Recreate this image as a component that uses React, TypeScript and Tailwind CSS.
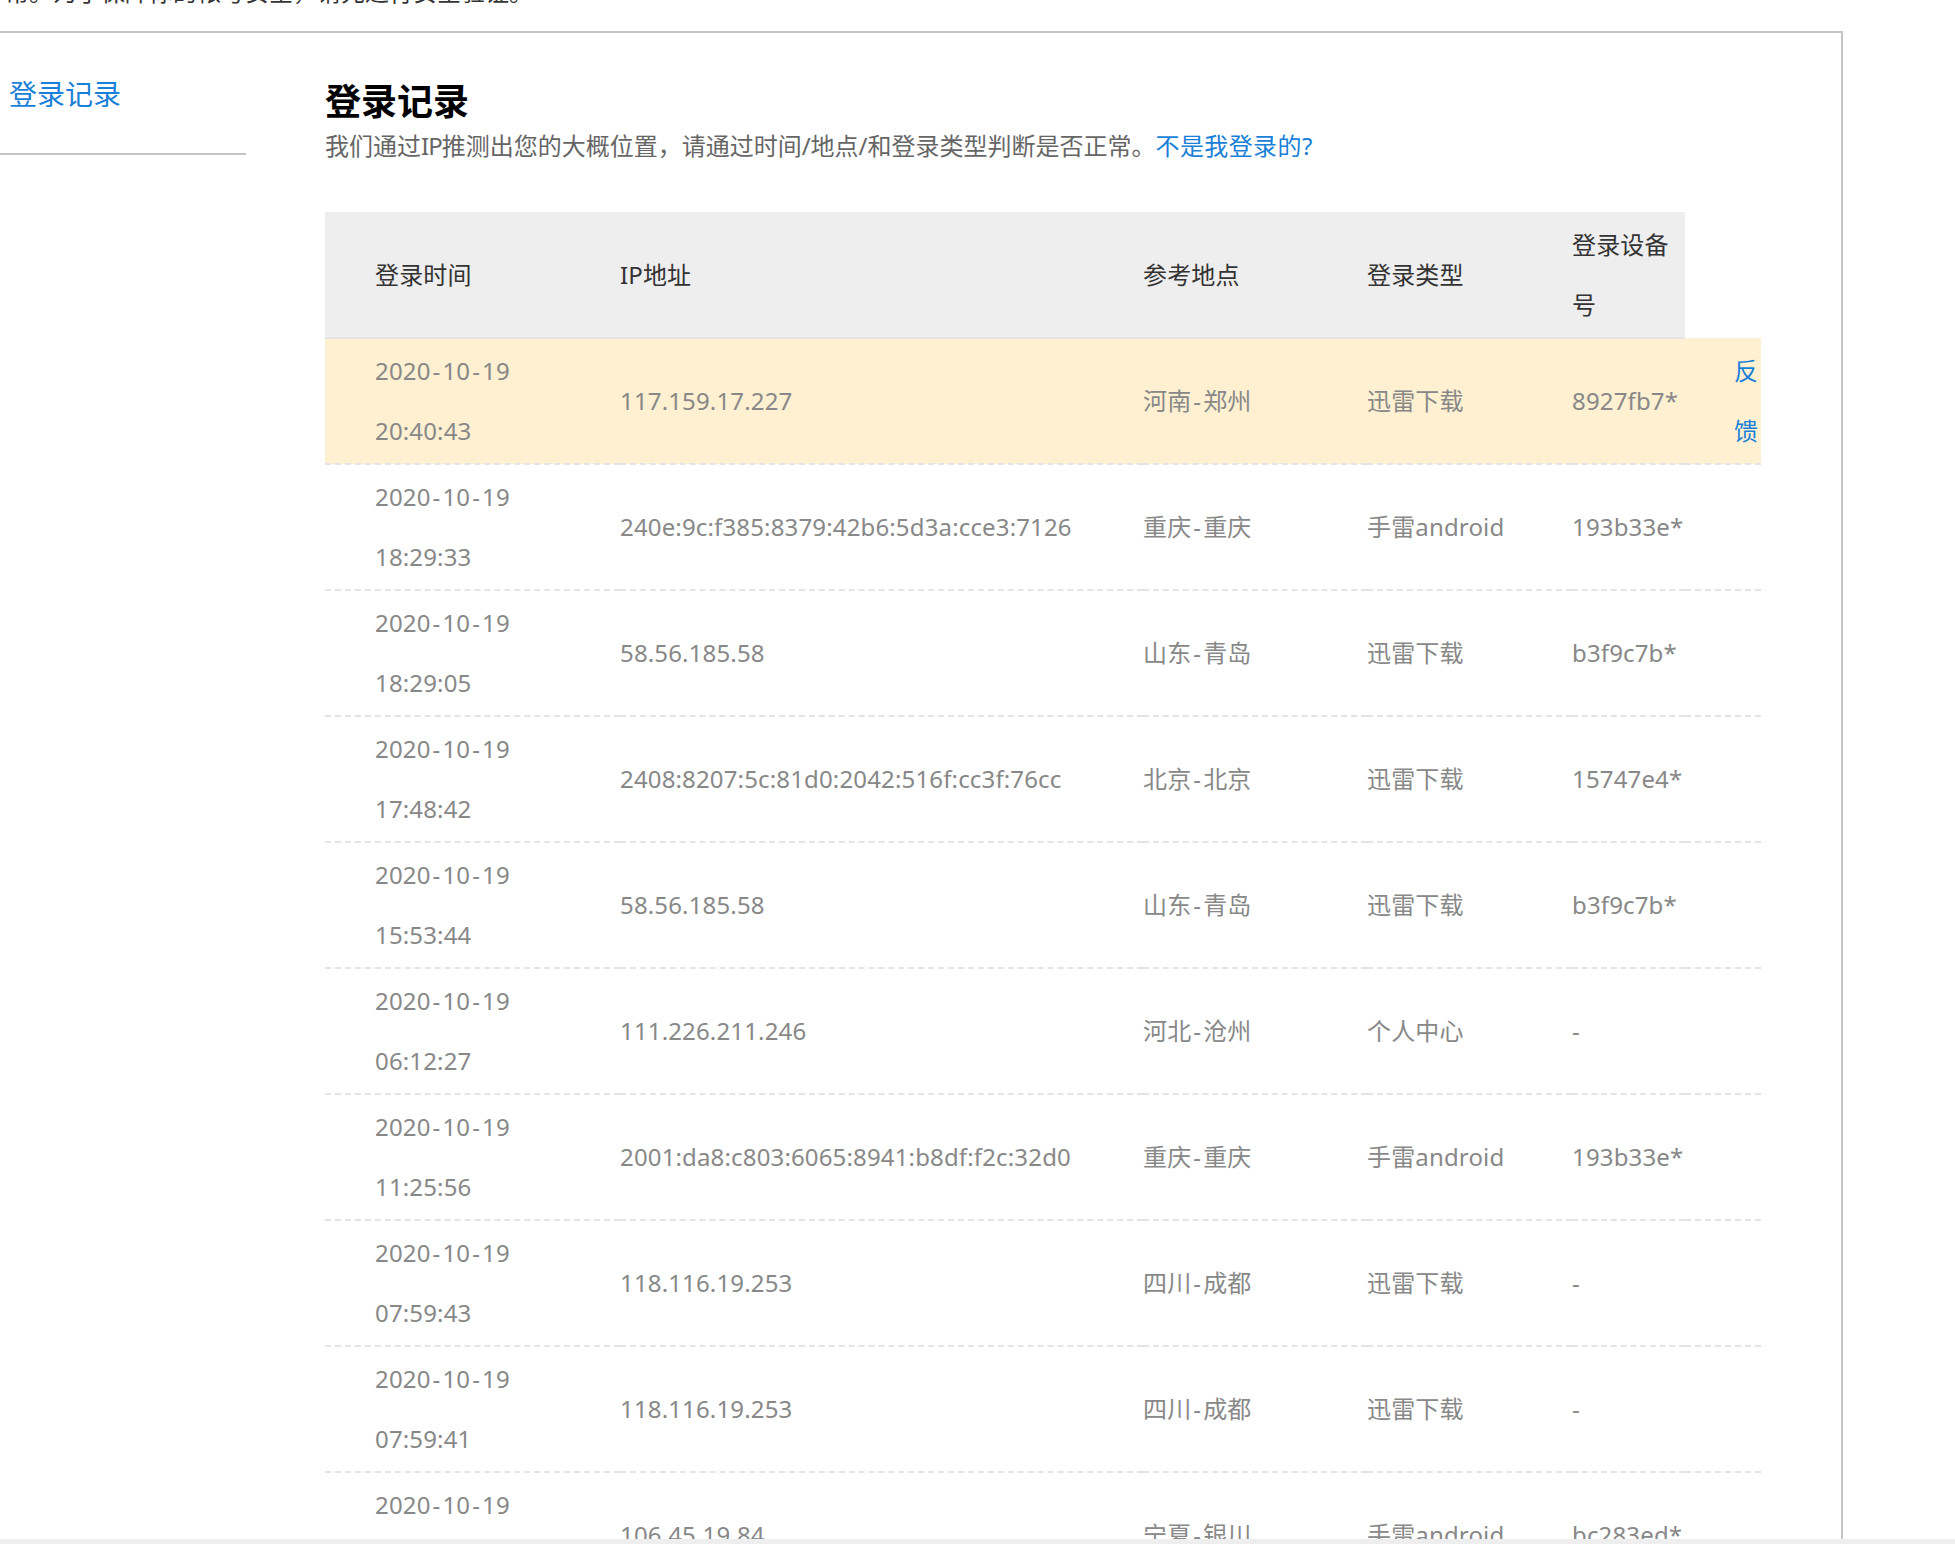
import React from 'react';

const rows = [
  ['2020-10-19', '20:40:43', '117.159.17.227', '河南-郑州', '迅雷下载', '8927fb7*'],
  ['2020-10-19', '18:29:33', '240e:9c:f385:8379:42b6:5d3a:cce3:7126', '重庆-重庆', '手雷android', '193b33e*'],
  ['2020-10-19', '18:29:05', '58.56.185.58', '山东-青岛', '迅雷下载', 'b3f9c7b*'],
  ['2020-10-19', '17:48:42', '2408:8207:5c:81d0:2042:516f:cc3f:76cc', '北京-北京', '迅雷下载', '15747e4*'],
  ['2020-10-19', '15:53:44', '58.56.185.58', '山东-青岛', '迅雷下载', 'b3f9c7b*'],
  ['2020-10-19', '06:12:27', '111.226.211.246', '河北-沧州', '个人中心', '-'],
  ['2020-10-19', '11:25:56', '2001:da8:c803:6065:8941:b8df:f2c:32d0', '重庆-重庆', '手雷android', '193b33e*'],
  ['2020-10-19', '07:59:43', '118.116.19.253', '四川-成都', '迅雷下载', '-'],
  ['2020-10-19', '07:59:41', '118.116.19.253', '四川-成都', '迅雷下载', '-'],
  ['2020-10-19', '07:59:40', '106.45.19.84', '宁夏-银川', '手雷android', 'bc283ed*'],
];

// the hyphen is wider in the original font
const Wide = ({ text }: { text: string }) => {
  const parts = text.split('-');
  return (
    <>
      {parts.map((p, i) => (
        <React.Fragment key={i}>
          {i > 0 && <span className="px-[2px]">-</span>}
          {p}
        </React.Fragment>
      ))}
    </>
  );
};

export default function App() {
  return (
    <div className="h-[1544px] overflow-hidden bg-white font-['Noto_Sans','Noto_Sans_CJK_SC',sans-serif] text-[24px]">
      <div className="h-[31px] overflow-hidden">
        <p className="mt-[-26px] ml-[-19px] leading-[36px] whitespace-nowrap text-[#333]">异常。为了保障你的帐号安全，请先进行安全验证。</p>
      </div>

      <div className="h-[1508px] overflow-hidden">
        <div className="flex h-full w-[1843px] border-t-2 border-r-2 border-[#c4c4c4]">
          {/* Side nav */}
          <div className="w-[246px] shrink-0">
            <div className="h-[122px] border-b-2 border-[#c4c4c4] pt-[40px] pl-[9px] text-[28px] leading-[42px] text-[#1a7fd8]">
              登录记录
            </div>
          </div>

          {/* Main */}
          <div className="ml-[79px] min-w-0">
            <h1 className="mt-[49px] text-[36px] leading-[40px] font-bold text-black">登录记录</h1>
            <p className="mt-[2px] leading-[44px] whitespace-nowrap text-[#666]">
              我们通过<span className="tracking-[-1px]">IP</span>推测出您的大概位置，请通过时间/地点/和登录类型判断是否正常。
              <a className="tracking-[0.4px] text-[#1a7fd8]">不是我登录的?</a>
            </p>

            <table className="mt-[44px] w-[1436px] table-fixed border-collapse tracking-[0.15px] text-[#888]">
              <colgroup>
                <col className="w-[295px]" />
                <col className="w-[523px]" />
                <col className="w-[224px]" />
                <col className="w-[205px]" />
                <col className="w-[113px]" />
                <col className="w-[76px]" />
              </colgroup>
              <thead>
                <tr className="h-[126px] leading-[60px] text-[#333]">
                  <th className="border-b-2 border-[#e4e4e4] bg-[#eeeeee] pl-[50px] text-left font-normal">登录时间</th>
                  <th className="border-b-2 border-[#e4e4e4] bg-[#eeeeee] text-left font-normal">IP地址</th>
                  <th className="border-b-2 border-[#e4e4e4] bg-[#eeeeee] text-left font-normal">参考地点</th>
                  <th className="border-b-2 border-[#e4e4e4] bg-[#eeeeee] text-left font-normal">登录类型</th>
                  <th className="border-b-2 border-[#e4e4e4] bg-[#eeeeee] text-left font-normal">登录设备号</th>
                </tr>
              </thead>
              <tbody>
                {rows.map((r, i) => (
                  <tr key={i} className={`h-[126px] border-b-2 border-dashed border-[#e4e4e4] leading-[60px] ${i === 0 ? 'bg-[#fef0d1]' : ''}`}>
                    <td className="pl-[50px]">
                      <Wide text={r[0]} />
                      <br />
                      {r[1]}
                    </td>
                    <td>{r[2]}</td>
                    <td><Wide text={r[3]} /></td>
                    <td>{r[4]}</td>
                    <td>{r[5]}</td>
                    <td className="pl-[49px]">{i === 0 && <a className="text-[#1a7fd8]">反馈</a>}</td>
                  </tr>
                ))}
              </tbody>
            </table>
          </div>
        </div>
      </div>

      <div className="h-[5px] bg-[#eeeeee]" />
    </div>
  );
}
